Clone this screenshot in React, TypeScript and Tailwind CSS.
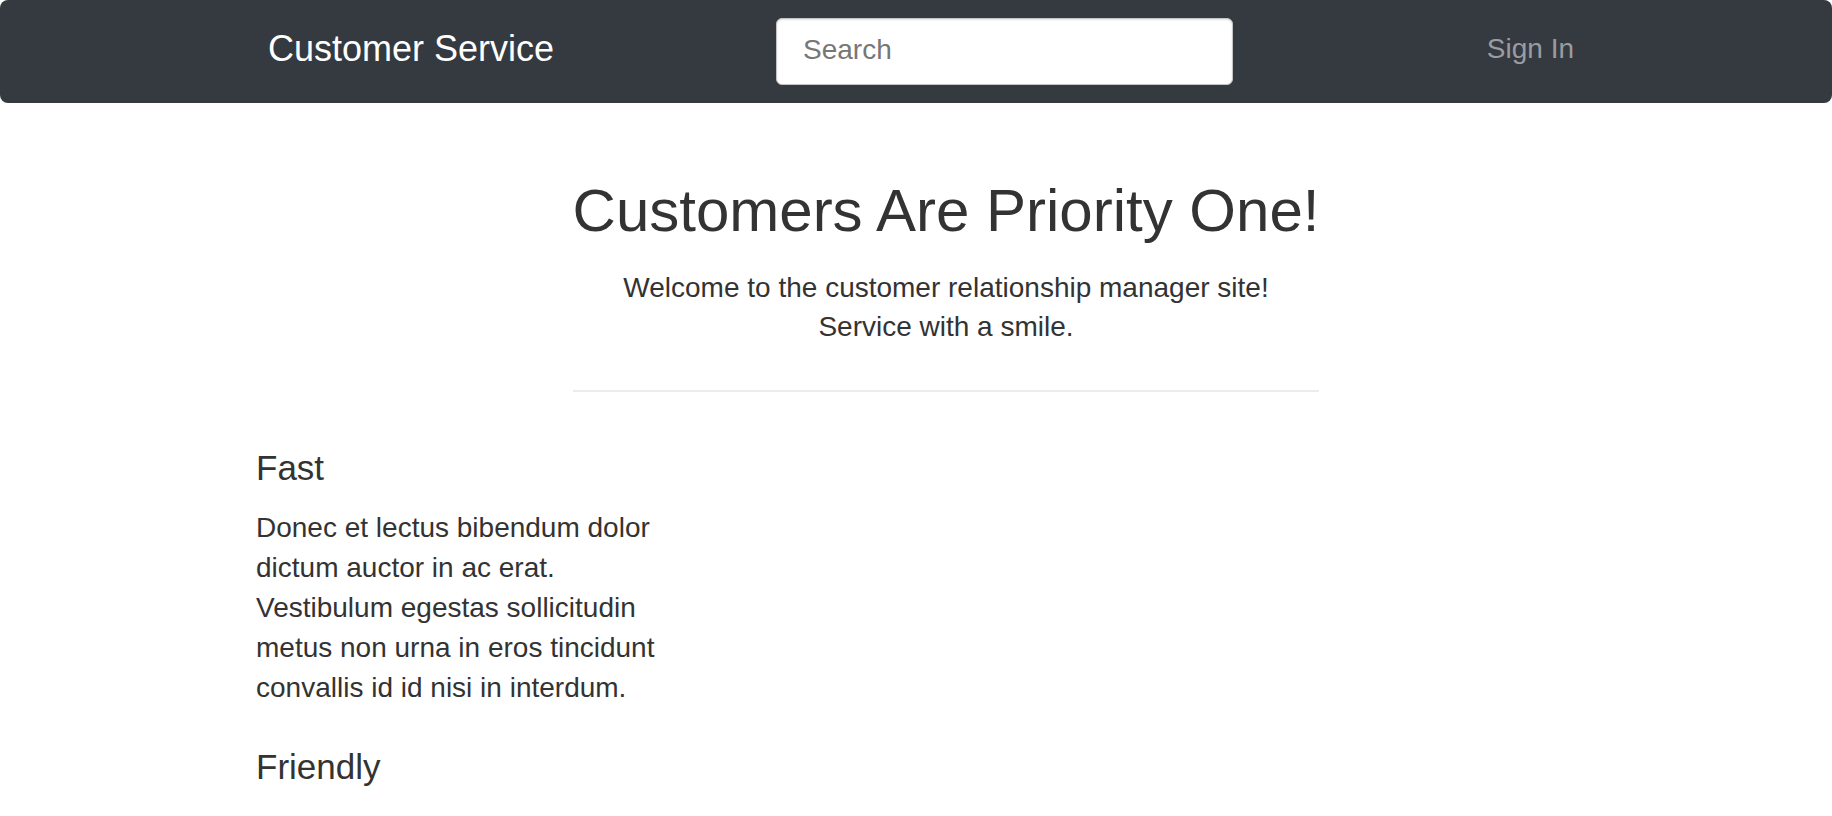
import React from "react";

const features = [
  {
    title: "Fast",
    body: "Donec et lectus bibendum dolor dictum auctor in ac erat. Vestibulum egestas sollicitudin metus non urna in eros tincidunt convallis id id nisi in interdum.",
  },
  {
    title: "Friendly",
    body: "",
  },
];

const NavBar: React.FC = () => {
  return (
    <nav className="h-[103px] bg-[#343a40] rounded-[8px]">
      <div className="w-[1320px] mx-auto h-full flex items-center">
        <a className="w-[520px] pl-[12px] mb-[6px] text-[36px] leading-[40px] text-white">
          Customer Service
        </a>
        <input
          type="text"
          placeholder="Search"
          className="w-[457px] h-[67px] rounded-[6px] border border-[#c4c4c4] bg-white pl-[26px] pb-[4px] text-[28px] text-[#333] placeholder:text-[#777] shadow-[inset_0_1px_2px_rgba(0,0,0,0.12)] outline-none"
        />
        <div className="flex-1 flex justify-end pr-[2px]">
          <a className="mb-[5px] text-[28px] leading-[32px] text-[#9a9ca0]">Sign In</a>
        </div>
      </div>
    </nav>
  );
};

export default function App() {
  return (
    <div className="min-h-screen bg-white text-[#333] font-['Liberation_Sans',Arial,sans-serif]">
      <NavBar />

      <main className="w-[1320px] mx-auto">
        <div className="flex justify-center pl-[60px] pt-[72px]">
          <div className="w-fit text-center">
            <h1 className="text-[60px] leading-[72px]">Customers Are Priority One!</h1>
            <p className="mt-[21px] text-[28px] leading-[39px]">
              Welcome to the customer relationship manager site!
              <br />
              Service with a smile.
            </p>
            <hr className="mt-[44px] border-0 h-[2px] bg-[#ececec]" />
          </div>
        </div>

        <div className="w-[410px] pt-[55px] flex flex-col gap-[38px]">
          {features.map((f) => (
            <section key={f.title}>
              <h3 className="text-[35px] leading-[41px]">{f.title}</h3>
              {f.body && <p className="mt-[20px] text-[28px] leading-[40px]">{f.body}</p>}
            </section>
          ))}
        </div>
      </main>
    </div>
  );
}
